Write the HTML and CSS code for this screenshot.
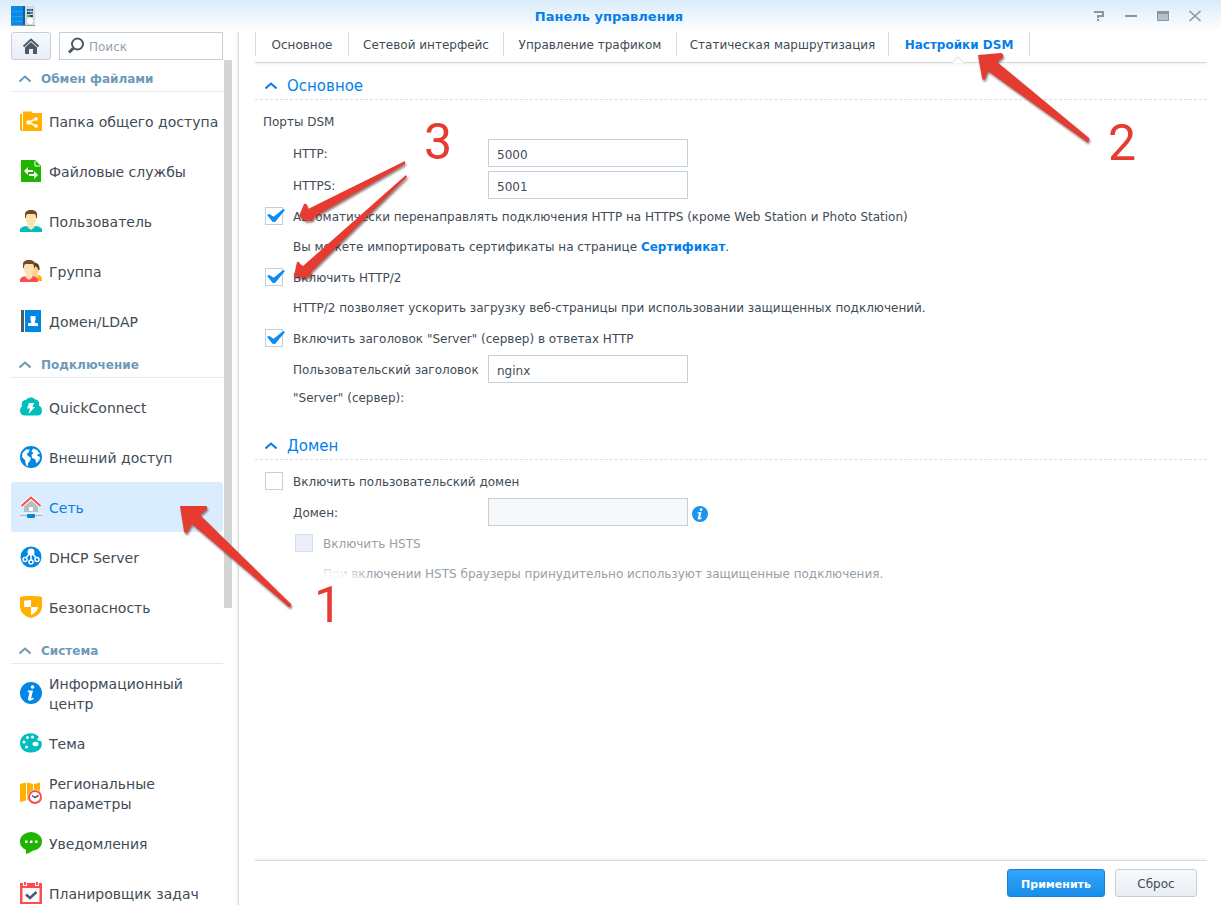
FILE: index.html
```html
<!DOCTYPE html>
<html lang="ru">
<head>
    <meta charset="UTF-8">
    <meta name="viewport" content="width=device-width, initial-scale=1.0">
    <title>Панель управления</title>
    <link rel="stylesheet" href="styles.css">
</head>
<body>
    <header class="titlebar">
        <svg class="app-icon" width="24" height="20" viewBox="0 0 24 20">
            <rect x="13" y="0" width="11" height="19" fill="#d3d9de"/>
            <rect x="0" y="0" width="13" height="19" fill="#0a8ae6"/>
            <rect x="12" y="0" width="2" height="19" fill="#0c5fa5"/>
            <path d="M1 5.500h2M4 5.500h7M1 10.500h2M4 10.500h7M1 15.500h2M4 15.500h7" stroke="#1fa6ee"/>
            <path d="M16 4h6M16 7h6M16 10h6" stroke="#33475a" stroke-width="2"/>
            <path d="M17 4h4M19 7h3" stroke="#3cc7ff"/>
            <path d="M16 10h3" stroke="#3fc13a" stroke-width="2"/>
            <circle cx="19" cy="15" r="3" fill="#fff"/>
            <path d="M0 19.500h24" stroke="#8b98a3"/>
        </svg>
        <h1>Панель управления</h1>
        <div class="window-tools">
            <button type="button" aria-label="Справка"><svg width="14" height="14" viewBox="0 0 14 14"><path d="M2 3h9v4H6v2M6 10v2" fill="none" stroke="#8995a1" stroke-width="2"/></svg></button>
            <button type="button" aria-label="Свернуть"><svg width="14" height="14" viewBox="0 0 14 14"><path d="M1 7h12" stroke="#8995a1" stroke-width="2"/></svg></button>
            <button type="button" aria-label="Развернуть"><svg width="14" height="14" viewBox="0 0 14 14"><path d="M1.500 2.500h11v9h-11z" fill="#b5c0ca" stroke="#8995a1"/><path d="M1 3.500h12" stroke="#8995a1" stroke-width="3"/></svg></button>
            <button type="button" aria-label="Закрыть"><svg width="14" height="14" viewBox="0 0 14 14"><path d="M1.500 2l11 10M12.500 2l-11 10" stroke="#8995a1" stroke-width="1.600"/></svg></button>
        </div>
    </header>

    <div class="window">
        <aside class="sidebar">
            <div class="toolbar">
                <button type="button" class="home-btn" aria-label="Главная">
                    <svg width="18" height="18" viewBox="0 0 18 18"><path d="M1.500 9.500L9 2.500l7.500 7" fill="none" stroke="#4b5a67" stroke-width="2"/><path d="M3 10.500l6-5.500 6 5.500V17h-4v-5H7v5H3z" fill="#4b5a67"/></svg>
                </button>
                <label class="search">
                    <svg width="18" height="18" viewBox="0 0 18 18"><circle cx="10.500" cy="7" r="5.500" fill="none" stroke="#4b5a67" stroke-width="2"/><path d="M6.500 11l-4.500 4.500" stroke="#4b5a67" stroke-width="3"/></svg>
                    <input type="text" placeholder="Поиск" aria-label="Поиск">
                </label>
            </div>

            <nav class="menu">
                <h2 class="group"><svg class="chevron" width="12" height="8" viewBox="0 0 12 8"><path d="M.5 6.500L6 1.500l5.500 5"/></svg>Обмен файлами</h2>
                <ul>
                    <li><a href="#">
                        <svg width="22" height="22" viewBox="0 0 22 22"><path d="M0 4h2v16h-2zM3 1.500h8.500l1 1.500H22v18H1v-1h2z" fill="#ffb000"/><path d="M16.500 8.500l-8 4 8 3.500" fill="none" stroke="#fff" stroke-width="1.500"/><g fill="#fff"><circle cx="8.500" cy="12.500" r="2.200"/><circle cx="16" cy="9" r="1.800"/><circle cx="16" cy="16" r="1.800"/></g></svg>
                        <span>Папка общего доступа</span></a></li>
                    <li><a href="#">
                        <svg width="22" height="22" viewBox="0 0 22 22"><path d="M1 0h14l6 6v16H1z" fill="#1eb400"/><path d="M15 1v5h5" fill="none" stroke="#fff"/><path d="M4 11l4-4v3h5v2H8v3zM18 15l-4-4v3H9v2h5v3z" fill="#fff"/></svg>
                        <span>Файловые службы</span></a></li>
                    <li><a href="#">
                        <svg width="22" height="22" viewBox="0 0 22 22"><path d="M0 22v-2c0-2 2-3.500 7-4h8c5 .5 7 2 7 4v2z" fill="#00bebe"/><path d="M6 4h10v4c0 4-2 6-2.500 7.500L15 17l-4 3-4-3 1.500-1.500C8 14 6 12 6 8z" fill="#ffe0b0"/><path d="M5 8V4c0-2 2-4 6-4s6 2 6 4v4h-1c0-3-.5-4-2-4H8C6.500 4 6 5 6 8z" fill="#734a26"/></svg>
                        <span>Пользователь</span></a></li>
                    <li><a href="#">
                        <svg width="22" height="22" viewBox="0 0 22 22"><path d="M14 16l4-1c3 .5 4 2 4 6h-8z" fill="#ffb000"/><path d="M12 5h7v5c0 3-2 4-2 6l2 1-3 3-4-3z" fill="#ffd090"/><path d="M12 3c5-1 8 1 7.500 7H18c0-3-2-4-5-4z" fill="#5d3b22"/><path d="M0 22v-2c0-2 2-3.500 6-4h6c4 .5 6 2 6 4v2z" fill="#ff4b4b"/><path d="M4 4h10v4c0 4-2 6-2.500 7.500L13 17l-4 3-4-3 1.500-1.500C6 14 4 12 4 8z" fill="#ffe0b0"/><path d="M3 8V4c0-2 2-4 6-4s6 2 6 4v4h-1c0-3-.5-4-2-4H6C4.500 4 4 5 4 8z" fill="#734a26"/></svg>
                        <span>Группа</span></a></li>
                    <li><a href="#">
                        <svg width="22" height="22" viewBox="0 0 22 22"><rect x="1" width="3" height="22" fill="#4b5a67"/><rect x="5" width="16" height="22" fill="#0086e5"/><path d="M10.500 6h5v4l-1 2.500 3.500 1V16H8v-2.500l3.500-1-1-2.500z" fill="#fff"/></svg>
                        <span>Домен/LDAP</span></a></li>
                </ul>

                <h2 class="group"><svg class="chevron" width="12" height="8" viewBox="0 0 12 8"><path d="M.5 6.500L6 1.500l5.500 5"/></svg>Подключение</h2>
                <ul>
                    <li><a href="#">
                        <svg width="22" height="22" viewBox="0 0 22 22"><path d="M5 19.500c-3 0-5-2-5-4.500 0-2 .8-3.500 2-4.500C1 6 3 4 6 4c1.500-3 7-3.500 9-.5 3-.5 5 3 4 6 2 1 3 3 3 5.500 0 3-2 4.500-4.500 4.500z" fill="#00bebe"/><path d="M9 7h5l-1.500 4H15l-6.500 7 1.500-5.500H7z" fill="#fff"/></svg>
                        <span>QuickConnect</span></a></li>
                    <li><a href="#">
                        <svg width="22" height="22" viewBox="0 0 22 22"><circle cx="11" cy="11" r="11" fill="#0086e5"/><path d="M2.500 7L6 3.500l3.500 0L9 6 7 7.500l.5 2L11 12l-1 3-2 2v3.500L6 19l-1-5-3-3zM13 2.500l4 1.500 3 4h-2l-1 1.500 3 1.500-.5 3-3 3.500-1.500-4.500-3-1-.5-3 2-2-2-1.500z" fill="#fff"/></svg>
                        <span>Внешний доступ</span></a></li>
                    <li class="active"><a href="#" aria-current="page">
                        <svg width="22" height="22" viewBox="0 0 22 22"><path d="M4 9l7-6 7 6v7H4z" fill="#b4bfc6"/><rect x="9" y="11" width="4" height="4" fill="#fff"/><path d="M1.500 10L11 1.500l9.500 8.500" fill="none" stroke="#fff" stroke-width="4"/><path d="M1.500 10L11 1.500l9.500 8.500" fill="none" stroke="#ff4b4b" stroke-width="2"/><path d="M0 19.500h22" stroke="#fff" stroke-width="4"/><path d="M0 19.500h22" stroke="#b4bfc6" stroke-width="2"/><rect x="7" y="18" width="8" height="4" rx="1" fill="#0086e5"/></svg>
                        <span>Сеть</span></a></li>
                    <li><a href="#">
                        <svg width="22" height="22" viewBox="0 0 22 22"><circle cx="11" cy="11" r="10.500" fill="#0086e5"/><circle cx="11" cy="6" r="3.500" fill="#fff"/><path d="M11 7v8M10 7l-5 6M12 7l5 6" stroke="#fff" stroke-width="1.500"/><g fill="#0086e5" stroke="#fff" stroke-width="1.500"><circle cx="5" cy="13.500" r="2"/><circle cx="11" cy="16" r="2"/><circle cx="17" cy="13.500" r="2"/></g></svg>
                        <span>DHCP Server</span></a></li>
                    <li><a href="#">
                        <svg width="22" height="22" viewBox="0 0 22 22"><path d="M0 1c6-1.300 16-1.300 22 0v9c0 6-4 10-11 12C4 20 0 16 0 10z" fill="#ffb000"/><path d="M11 4v7H4V5c2-.7 5-1 7-1zM11 11h7c0 3-3 6.500-7 8z" fill="#fff"/></svg>
                        <span>Безопасность</span></a></li>
                </ul>

                <h2 class="group"><svg class="chevron" width="12" height="8" viewBox="0 0 12 8"><path d="M.5 6.500L6 1.500l5.500 5"/></svg>Система</h2>
                <ul>
                    <li><a href="#">
                        <svg width="22" height="22" viewBox="0 0 22 22"><circle cx="11" cy="11" r="11" fill="#0086e5"/><circle cx="12.500" cy="5" r="1.800" fill="#fff"/><path d="M8 8.500h5l-2 8 2.500-1v1.500c-3 2.500-6 2-5.500-.5l1.500-6L7.500 10z" fill="#fff"/></svg>
                        <span>Информационный центр</span></a></li>
                    <li><a href="#">
                        <svg width="22" height="22" viewBox="0 0 22 22"><path d="M19 5C16 1 8-.5 3 4-1 8-1 14 3 18c5 4 14 3 17-1 2-3 2-5 1.500-7.500-1.500-1-3-.5-4-1-1-1 .5-2 1.500-3.500z" fill="#00bebe"/><g fill="#fff"><circle cx="7.500" cy="5.500" r="1.500"/><circle cx="12.500" cy="5" r="1.500"/><circle cx="4" cy="10" r="1.500"/><circle cx="6.500" cy="15" r="1.500"/><ellipse cx="15.500" cy="12" rx="3" ry="2.200"/></g></svg>
                        <span>Тема</span></a></li>
                    <li><a href="#">
                        <svg width="22" height="22" viewBox="0 0 22 22"><path d="M0 2l6-1.500v18L0 20zM7 .5L13 2v17l-6-1zM14 2l6-1.500V10h-6z" fill="#ffb000"/><circle cx="15" cy="15" r="7.500" fill="#fff"/><circle cx="15" cy="15" r="6" fill="none" stroke="#ff4b4b" stroke-width="2"/><path d="M12 13.500l3 2 3.500-2" fill="none" stroke="#4b5a67" stroke-width="1.500"/></svg>
                        <span>Региональные параметры</span></a></li>
                    <li><a href="#">
                        <svg width="22" height="22" viewBox="0 0 22 22"><ellipse cx="11" cy="9.500" rx="11" ry="9.500" fill="#1eb400"/><path d="M6 16h9c-2 3-5 5-9 6z" fill="#1eb400"/><path d="M5 8.500h2.500v2.500H5zM10 8.500h2.500v2.500H10zM15 8.500h2.500v2.500H15z" fill="#fff"/></svg>
                        <span>Уведомления</span></a></li>
                    <li><a href="#">
                        <svg width="22" height="22" viewBox="0 0 22 22"><path d="M0 1h22v21H0z" fill="#ff4b4b"/><path d="M2.500 6h17v14h-17z" fill="#fff"/><path d="M3 0h4v4H3zM15 0h4v4h-4z" fill="#fff"/><path d="M4 0h2v3H4zM16 0h2v3h-2z" fill="#ff4b4b"/><path d="M6 12.500l4 3.500 6.500-6" fill="none" stroke="#4b5a67" stroke-width="2.500"/></svg>
                        <span>Планировщик задач</span></a></li>
                </ul>
            </nav>
            <div class="scroll-thumb"></div>
        </aside>

        <main class="content">
            <nav class="tabs">
                <a href="#">Основное</a>
                <a href="#">Сетевой интерфейс</a>
                <a href="#">Управление трафиком</a>
                <a href="#">Статическая маршрутизация</a>
                <a href="#" class="selected">Настройки DSM</a>
            </nav>

            <form class="settings" id="settings">
                <section>
                    <h3 class="section-title"><svg class="chevron" width="12" height="8" viewBox="0 0 12 8"><path d="M.5 6.500L6 1.500l5.500 5"/></svg>Основное</h3>
                    <p class="note">Порты DSM</p>
                    <div class="field">
                        <label for="http-port">HTTP:</label>
                        <input type="text" id="http-port" value="5000">
                    </div>
                    <div class="field">
                        <label for="https-port">HTTPS:</label>
                        <input type="text" id="https-port" value="5001">
                    </div>
                    <div class="check">
                        <input type="checkbox" id="redirect" checked>
                        <label for="redirect">Автоматически перенаправлять подключения HTTP на HTTPS (кроме Web Station и Photo Station)</label>
                    </div>
                    <p class="note indent">Вы можете импортировать сертификаты на странице <a href="#">Сертификат</a>.</p>
                    <div class="check">
                        <input type="checkbox" id="http2" checked>
                        <label for="http2">Включить HTTP/2</label>
                    </div>
                    <p class="note indent">HTTP/2 позволяет ускорить загрузку веб-страницы при использовании защищенных подключений.</p>
                    <div class="check">
                        <input type="checkbox" id="server-header" checked>
                        <label for="server-header">Включить заголовок "Server" (сервер) в ответах HTTP</label>
                    </div>
                    <div class="field">
                        <label for="custom-header">Пользовательский заголовок "Server" (сервер):</label>
                        <input type="text" id="custom-header" value="nginx">
                    </div>
                </section>

                <section>
                    <h3 class="section-title"><svg class="chevron" width="12" height="8" viewBox="0 0 12 8"><path d="M.5 6.500L6 1.500l5.500 5"/></svg>Домен</h3>
                    <div class="check">
                        <input type="checkbox" id="custom-domain">
                        <label for="custom-domain">Включить пользовательский домен</label>
                    </div>
                    <div class="field">
                        <label for="domain">Домен:</label>
                        <input type="text" id="domain" disabled>
                        <svg class="info" width="16" height="16" viewBox="0 0 22 22"><circle cx="11" cy="11" r="11" fill="#1c94ee"/><circle cx="12.500" cy="5" r="1.800" fill="#fff"/><path d="M8 8.500h5l-2 8 2.500-1v1.500c-3 2.500-6 2-5.500-.5l1.500-6L7.500 10z" fill="#fff"/></svg>
                    </div>
                    <div class="check nested">
                        <input type="checkbox" id="hsts" disabled>
                        <label for="hsts">Включить HSTS</label>
                    </div>
                    <p class="note nested">При включении HSTS браузеры принудительно используют защищенные подключения.</p>
                </section>
            </form>

            <footer class="actions">
                <button type="submit" form="settings" class="btn primary">Применить</button>
                <button type="reset" form="settings" class="btn">Сброс</button>
            </footer>
        </main>
    </div>

    <!-- Step numbers and arrows drawn over the window -->
    <svg class="steps" width="1221" height="905" viewBox="0 0 1221 905">
        <defs>
            <radialGradient id="glow">
                <stop offset="0.5" stop-color="#fff" stop-opacity="0.9"/>
                <stop offset="1" stop-color="#fff" stop-opacity="0"/>
            </radialGradient>
        </defs>
        <ellipse cx="332" cy="583" rx="42" ry="20" fill="url(#glow)"/>
        <g class="arrows">
            <path d="M180 506l26 0q2 1 1 3l-7 6 91 89q1 3-2 3l-97-83-5 9q-2 1-3-2z"/>
            <path d="M978 55l23-2q3 1 2 4l-6 5 92 76q1 3-2 4l-99-71-3 8q-2 2-3-1z"/>
            <path d="M299 216l5-12q2-1 3 1l1 4 97-48v3l-91 53-1 3-7 1z"/>
            <path d="M294 276l3-14q2-1 3 2l3 2 103-91 1 2-96 95 1 3-3 2-6 1z"/>
        </g>
        <g class="numbers">
            <text x="424" y="159">3</text>
            <text x="1108" y="160">2</text>
            <text x="314" y="622">1</text>
        </g>
    </svg>
</body>
</html>
```
FILE: styles.css
```css
:root {
    --blue: #057feb;
    --text: #414b55;
    --border: #c3d0dc;
    --line: #d7dadd;
}
* {
    box-sizing: border-box;
}
body {
    margin: 0;
    height: 100vh;
    display: flex;
    flex-direction: column;
    overflow: hidden;
    position: relative;
    background: #fff;
    color: var(--text);
    font-family: Verdana, "DejaVu Sans", sans-serif;
    font-size: 12px;
}
h1, h2, h3, p, ul {
    margin: 0;
    padding: 0;
}
ul {
    list-style: none;
}
a {
    color: inherit;
    text-decoration: none;
}
button, input {
    font: inherit;
    color: inherit;
}

/* title bar */
.titlebar {
    flex: none;
    height: 32px;
    display: grid;
    grid-template-columns: 1fr auto 1fr;
    align-items: center;
    padding: 0 14px 2px 11px;
    background: linear-gradient(#d8ebfa, #fff);
}
.titlebar h1 {
    color: var(--blue);
    font-size: 13px;
    line-height: 30px;
    padding-top: 2px;
}
.app-icon {
    display: block;
}
.window-tools {
    display: flex;
    justify-content: flex-end;
    gap: 8px;
}
.window-tools button {
    width: 24px;
    height: 28px;
    padding: 0;
    border: 0;
    background: none;
    display: grid;
    place-items: center;
}

.window {
    flex: 1;
    min-height: 0;
    display: flex;
}

/* sidebar */
.sidebar {
    flex: none;
    width: 239px;
    padding: 0 15px 0 11px;
    position: relative;
    display: flex;
    flex-direction: column;
    border-right: 1px solid var(--line);
    box-shadow: inset -3px 0 3px -2px #eceeef;
}
.toolbar {
    flex: none;
    display: flex;
    gap: 8px;
    margin-bottom: 4px;
}
.home-btn {
    width: 40px;
    height: 28px;
    padding: 0;
    display: grid;
    place-items: center;
    border: 1px solid var(--border);
    border-radius: 3px;
    background: linear-gradient(#f7fafc, #e9eef4);
}
.search {
    flex: 1;
    min-width: 0;
    height: 28px;
    display: flex;
    align-items: center;
    gap: 4px;
    padding: 0 7px;
    border: 1px solid var(--border);
}
.search svg {
    flex: none;
}
.search input {
    width: 100%;
    min-width: 0;
    padding: 2px 0 0;
    border: 0;
    outline: 0;
    background: none;
}
.search input::placeholder {
    color: #96a0aa;
}
.menu {
    flex: 1;
    min-height: 0;
    overflow: hidden;
}
.chevron {
    flex: none;
    fill: none;
    stroke: currentColor;
    stroke-width: 2;
}
.group {
    height: 28px;
    display: flex;
    align-items: center;
    gap: 10px;
    padding: 2px 0 0 8px;
    margin-bottom: 4px;
    border-bottom: 1px solid #e4e9ee;
    color: #6c9ab8;
    font-size: 12px;
}
.menu ul {
    margin-bottom: 4px;
}
.menu a {
    height: 50px;
    display: flex;
    align-items: center;
    gap: 7px;
    padding-left: 9px;
    font-size: 14px;
    line-height: 20px;
}
.menu a svg {
    flex: none;
}
.menu a span {
    padding-top: 2px;
}
.menu .active a {
    background: #d9edff;
    border-radius: 3px;
    color: var(--blue);
}
.scroll-thumb {
    position: absolute;
    top: 28px;
    right: 6px;
    width: 8px;
    height: 548px;
    background: #d4d5d7;
}

/* main panel */
.content {
    flex: 1;
    min-width: 0;
    display: flex;
    flex-direction: column;
    padding: 0 14px 0 16px;
}
.tabs {
    flex: none;
    display: grid;
    grid-template-columns: 93px 155px 173px 212px 142px;
    height: 31px;
    border-bottom: 1px solid var(--line);
    box-shadow: 0 2px 2px -1px #eceeef;
}
.tabs a {
    position: relative;
    height: 24px;
    line-height: 26px;
    text-align: center;
    border-left: 1px solid #d3e0ec;
    white-space: nowrap;
}
.tabs .selected {
    border-right: 1px solid #d3e0ec;
    color: var(--blue);
    font-weight: bold;
}
.tabs .selected::after {
    content: "";
    position: absolute;
    left: 64px;
    top: 26px;
    width: 9px;
    height: 9px;
    background: #fff;
    border: solid var(--line);
    border-width: 1px 0 0 1px;
    transform: rotate(45deg);
    clip-path: polygon(0 0, 100% 0, 0 100%);
}
.settings {
    flex: 1;
    min-height: 0;
    overflow: hidden;
    padding-top: 9px;
}
.settings section {
    margin-bottom: 19px;
}
.section-title {
    height: 28px;
    display: flex;
    align-items: center;
    gap: 10px;
    padding-left: 10px;
    margin-bottom: 6px;
    border-bottom: 1px dashed #d5dfe8;
    color: var(--blue);
    font-size: 15px;
    font-weight: normal;
}
.note {
    height: 31px;
    padding: 1px 0 0 8px;
    line-height: 31px;
}
.note.indent {
    padding-left: 38px;
}
.note.nested {
    padding-left: 68px;
    color: #98a0a8;
}
.note a {
    color: var(--blue);
    font-weight: bold;
}
.field {
    display: flex;
    align-items: flex-start;
    padding: 2px 0 2px 38px;
}
.field label {
    width: 195px;
    line-height: 28px;
    padding-top: 1px;
    margin-bottom: -1px;
}
.field input {
    width: 200px;
    height: 28px;
    padding: 4px 8px 0;
    border: 1px solid var(--border);
    background: #fff;
}
.field input:disabled {
    background: #f6f8fa;
}
.info {
    margin: 8px 0 0 4px;
}
.check {
    height: 30px;
    display: flex;
    align-items: center;
    gap: 10px;
    padding-left: 10px;
}
.check.nested {
    padding-left: 40px;
    color: #98a0a8;
}
.check label {
    padding-top: 2px;
}
.check input {
    appearance: none;
    position: relative;
    width: 18px;
    height: 18px;
    margin: 0;
    border: 1px solid var(--border);
    background: #fff;
}
.check input:checked::after {
    content: "";
    position: absolute;
    left: 1px;
    top: 1px;
    width: 18px;
    height: 13px;
    background: #0a8cf0;
    clip-path: polygon(0 45%, 13% 38%, 37% 60%, 90% 0, 100% 8%, 45% 100%, 30% 98%);
}
.check input:disabled {
    border-color: #d7e0ea;
    background: #eaeff7;
}

/* footer */
.actions {
    flex: none;
    display: flex;
    justify-content: flex-end;
    gap: 10px;
    padding: 8px 10px;
    border-top: 1px solid var(--line);
    box-shadow: 0 -2px 2px -1px #eceeef;
}
.btn {
    width: 82px;
    height: 28px;
    padding: 2px 0 0;
    border: 1px solid var(--border);
    border-radius: 3px;
    background: linear-gradient(#f7fafc, #e9eef4);
}
.btn.primary {
    width: 98px;
    border-color: #1682d8;
    background: linear-gradient(#32a5fb, #178ee9);
    color: #fff;
    font-size: 11px;
    font-weight: bold;
}

/* annotations */
.steps {
    position: absolute;
    top: 0;
    left: 0;
    pointer-events: none;
}
.arrows {
    fill: #e63b30;
    filter: drop-shadow(1px 2px 1px rgba(70, 30, 30, 0.6));
}
.numbers {
    fill: #e63b30;
    font-family: Roboto, "Liberation Sans", sans-serif;
    font-size: 50px;
}
```
